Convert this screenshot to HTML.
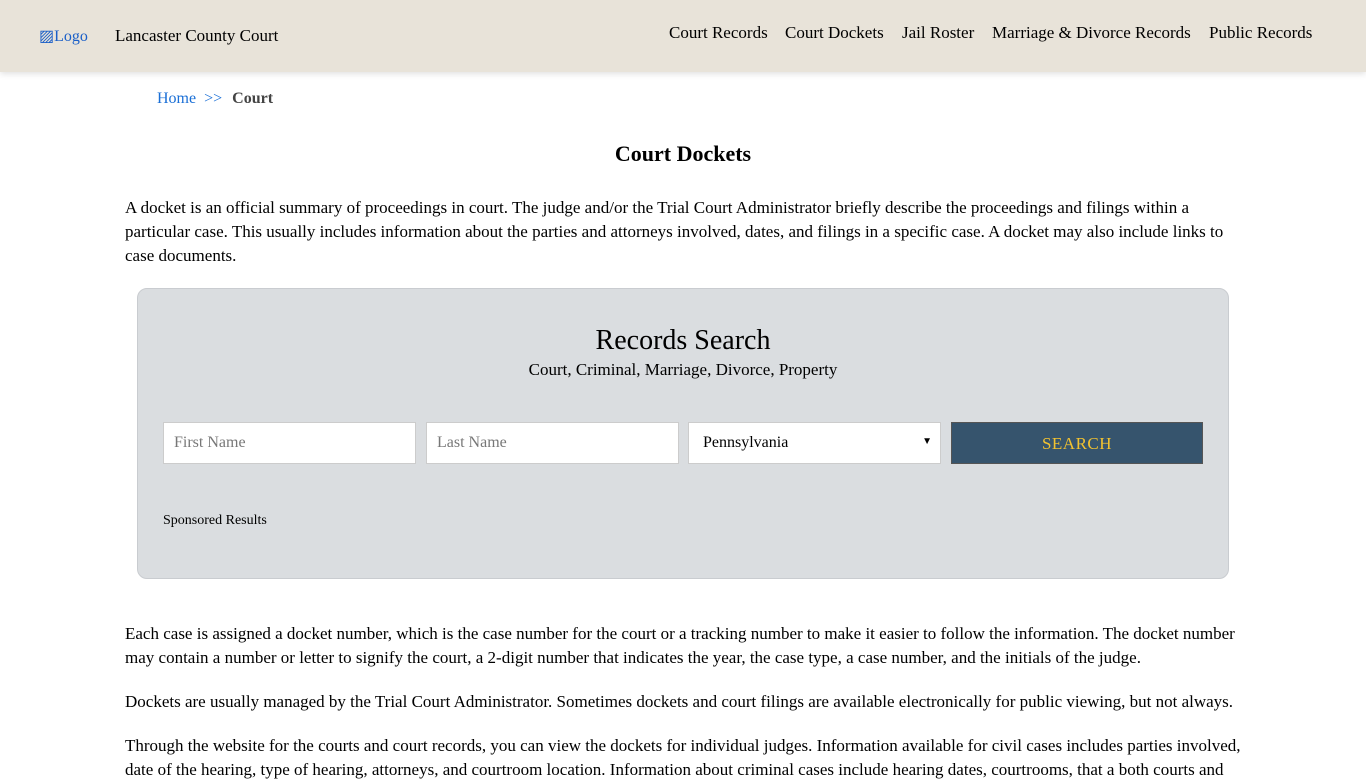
<!DOCTYPE html>
<html><head><meta charset="utf-8"><style>
*{box-sizing:border-box}
body{margin:0;font-family:"Liberation Serif",serif;color:#000;background:#fff;width:1366px;height:768px;overflow:hidden}
.hdr{position:absolute;left:0;top:0;width:1366px;height:72px;background:#e8e3d9;box-shadow:0 2px 6px rgba(0,0,0,.12)}
.logo{position:absolute;left:39px;top:26px;color:#1a5fc8;font-size:16px}
.title{position:absolute;left:115px;top:26px;font-size:17px}
.nav{position:absolute;top:23px;font-size:17px}
.bc{position:absolute;left:157px;top:90px;font-size:16px;color:#1a6fd6}
.bc b{color:#444;margin-left:6px}
h1{position:absolute;left:0;width:1366px;top:141px;margin:0;text-align:center;font-size:22px}
p{position:absolute;left:125px;width:1120px;margin:0;font-size:17px;line-height:24px}
.box{position:absolute;left:137px;top:288px;width:1092px;height:291px;background:#dadde0;border:1px solid #c9ccd0;border-radius:10px}
.rs{position:absolute;left:0;width:100%;top:36px;text-align:center;font-size:28px}
.rs2{position:absolute;left:0;width:100%;top:71px;text-align:center;font-size:17px}
.in{position:absolute;top:133px;height:42px;width:253px;background:#fff;border:1px solid #ccc;font-size:16px;color:#777;padding:11px 10px}
.btn{position:absolute;left:813px;top:133px;width:252px;height:42px;background:#36546d;color:#f2c230;text-align:center;font-size:17px;line-height:42px;letter-spacing:.5px;border:1px solid #555}
.sp{position:absolute;left:25px;top:224px;font-size:14px}
</style></head><body>
<div class="hdr">
<span class="logo">▨Logo</span>
<span class="title">Lancaster County Court</span>
<span class="nav" style="left:669px">Court Records</span>
<span class="nav" style="left:785px">Court Dockets</span>
<span class="nav" style="left:902px">Jail Roster</span>
<span class="nav" style="left:992px">Marriage &amp; Divorce Records</span>
<span class="nav" style="left:1209px">Public Records</span>
</div>
<div class="bc">Home &nbsp;&gt;&gt; <b>Court</b></div>
<h1>Court Dockets</h1>
<p style="top:196px">A docket is an official summary of proceedings in court. The judge and/or the Trial Court Administrator briefly describe the proceedings and filings within a particular case. This usually includes information about the parties and attorneys involved, dates, and filings in a specific case. A docket may also include links to case documents.</p>
<div class="box">
<div class="rs">Records Search</div>
<div class="rs2">Court, Criminal, Marriage, Divorce, Property</div>
<div class="in" style="left:25px">First Name</div>
<div class="in" style="left:288px">Last Name</div>
<div class="in" style="left:550px;color:#000;padding-left:14px">Pennsylvania<span style="position:absolute;right:8px;top:13px;font-size:10px">▼</span></div>
<div class="btn">SEARCH</div>
<div class="sp">Sponsored Results</div>
</div>
<p style="top:622px">Each case is assigned a docket number, which is the case number for the court or a tracking number to make it easier to follow the information. The docket number may contain a number or letter to signify the court, a 2-digit number that indicates the year, the case type, a case number, and the initials of the judge.</p>
<p style="top:690px">Dockets are usually managed by the Trial Court Administrator. Sometimes dockets and court filings are available electronically for public viewing, but not always.</p>
<p style="top:734px">Through the website for the courts and court records, you can view the dockets for individual judges. Information available for civil cases includes parties involved, date of the hearing, type of hearing, attorneys, and courtroom location. Information about criminal cases include hearing dates, courtrooms, that a both courts and</p>
</body></html>
